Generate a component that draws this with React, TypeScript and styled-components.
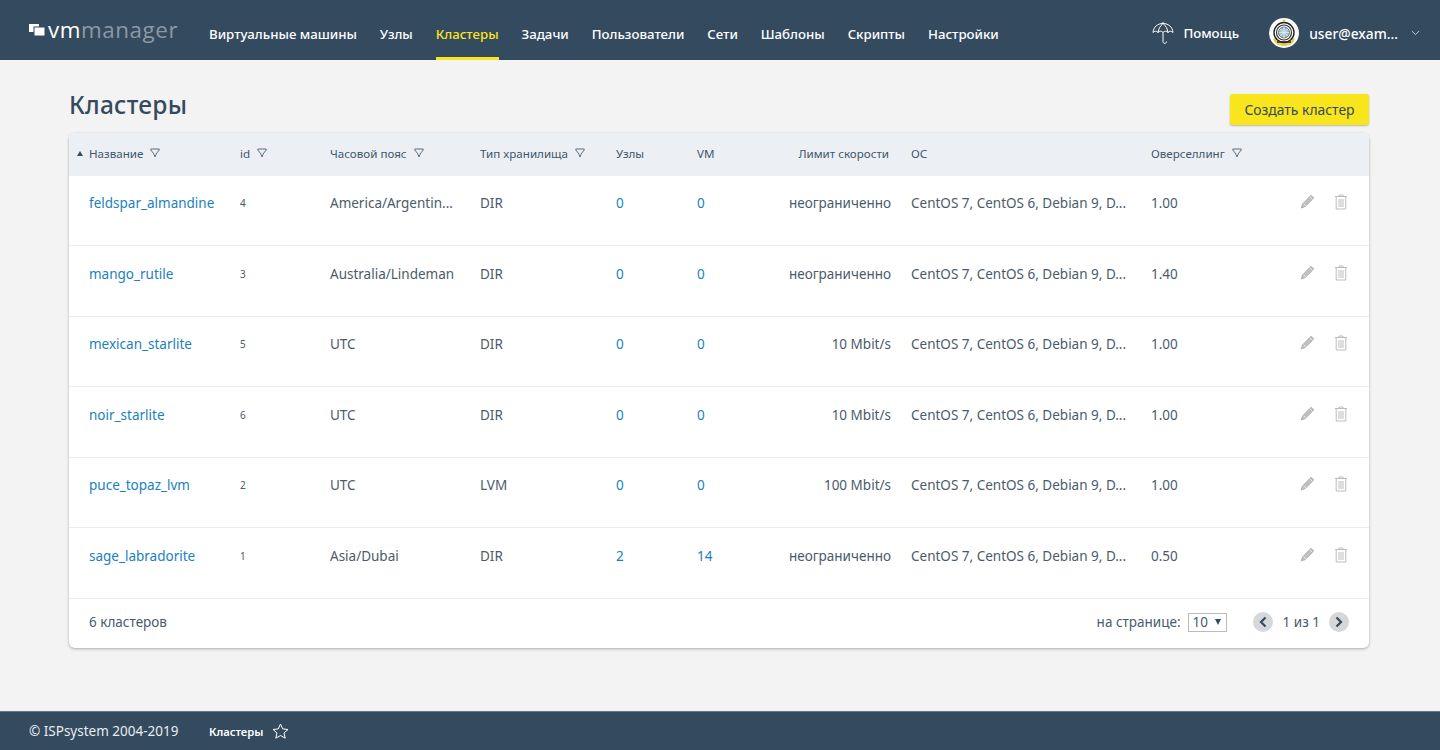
import React from "react"
import styled, { createGlobalStyle } from "styled-components"

const GlobalStyle = createGlobalStyle`
    html, body {
        margin: 0;
        padding: 0;
        height: 100%;
        background: #f3f3f3;
        font-family: "Noto Sans", "Open Sans", sans-serif;
        color: #344a5e;
    }
    #root {
        height: 100%;
    }
`

const COLUMNS = "161px 90px 150px 136px 81px 90px 124px 240px 140px 1fr"

const Page = styled.div`
    height: 750px;
    display: flex;
    flex-direction: column;
    overflow: hidden;
`

const Header = styled.header`
    height: 60px;
    flex-shrink: 0;
    display: flex;
    align-items: stretch;
    background: #344a5f;
    padding-left: 29px;
`

const Logo = styled.div`
    width: 180px;
    display: flex;
    align-items: center;
    gap: 2px;
    box-sizing: border-box;
`

const LogoText = styled.div`
    font-family: "Open Sans", sans-serif;
    font-size: 22.4px;
    letter-spacing: 0.55px;
    line-height: 24px;
    color: #8b98a5;
`

const LogoStrong = styled.span`
    color: #ffffff;
`

const Nav = styled.nav`
    display: flex;
    gap: 22.9px;
`

const NavItem = styled.a<{ $active?: boolean }>`
    display: flex;
    align-items: center;
    padding-top: 11px;
    height: 60px;
    box-sizing: border-box;
    font-size: 13.25px;
    font-weight: 500;
    color: ${({ $active }) => ($active ? "#f9e51b" : "#ffffff")};
    border-bottom: 3px solid ${({ $active }) => ($active ? "#f9e51b" : "transparent")};
`

const HeaderRight = styled.div`
    margin-left: auto;
    display: flex;
    align-items: center;
    padding-right: 20px;
    padding-top: 6px;
    font-size: 13.25px;
    font-weight: 500;
    color: #ffffff;
`

const Help = styled.div`
    display: flex;
    align-items: center;
    gap: 9px;
    margin-right: 30px;
`

const User = styled.div`
    display: flex;
    align-items: center;
    gap: 10px;
    font-size: 13.8px;
`

const UserChevron = styled.svg`
    margin-left: 3px;
`

const Main = styled.main`
    flex-grow: 1;
    padding: 34px 71px 0 69px;
    min-height: 0;
`

const TitleRow = styled.div`
    height: 39px;
    display: flex;
    align-items: flex-start;
    justify-content: space-between;
`

const Title = styled.h1`
    margin: -2px 0 0;
    font-size: 24.5px;
    line-height: 25px;
    font-weight: 500;
    letter-spacing: 0.25px;
    color: #344a5f;
`

const CreateButton = styled.button`
    width: 139px;
    height: 31px;
    padding: 0;
    border: none;
    border-radius: 3px;
    background: #f9e51b;
    box-shadow: 0 1px 2px rgba(0, 0, 0, 0.25);
    font-family: inherit;
    font-size: 13.9px;
    color: #344a5f;
`

const Card = styled.section`
    background: #ffffff;
    border-radius: 6px;
    box-shadow: 0 1px 3px rgba(0, 0, 0, 0.3);
    overflow: hidden;
`

const HeadRow = styled.div`
    height: 42.5px;
    padding-bottom: 2px;
    box-sizing: border-box;
    display: grid;
    grid-template-columns: ${COLUMNS};
    align-items: center;
    background: #ecf0f4;
    font-size: 11.6px;
    color: #42566a;
`

const HeadCell = styled.div<{ $first?: boolean; $right?: boolean }>`
    position: relative;
    display: flex;
    align-items: center;
    justify-content: ${({ $right }) => ($right ? "flex-end" : "flex-start")};
    gap: 7px;
    padding-left: ${({ $first }) => ($first ? "20px" : "10px")};
    padding-right: ${({ $right }) => ($right ? "12px" : "0")};
    white-space: nowrap;
`

const SortMark = styled.span`
    position: absolute;
    left: 8px;
    top: 5px;
    width: 0;
    height: 0;
    border-left: 3px solid transparent;
    border-right: 3px solid transparent;
    border-bottom: 5px solid #344a5f;
`

const Row = styled.div`
    height: 70.5px;
    box-sizing: border-box;
    padding-top: 18.9px;
    display: grid;
    grid-template-columns: ${COLUMNS};
    align-items: start;
    border-bottom: 1px solid #ececec;
    line-height: 18px;
    color: #4a5b6b;
`

const Cell = styled.div<{ $first?: boolean; $right?: boolean; $small?: boolean }>`
    min-width: 0;
    padding-left: ${({ $first }) => ($first ? "20px" : "10px")};
    padding-right: ${({ $right }) => ($right ? "10px" : "0")};
    text-align: ${({ $right }) => ($right ? "right" : "left")};
    font-size: ${({ $small }) => ($small ? "10px" : "13.5px")};
    white-space: nowrap;
`

const CellLink = styled.a`
    color: #1a81c0;
    text-decoration: none;
`

const Actions = styled.div`
    display: flex;
    justify-content: flex-end;
    gap: 19px;
    padding-right: 21px;
`

const CardFooter = styled.div`
    height: 49.5px;
    box-sizing: border-box;
    padding: 0 20px 2px;
    display: flex;
    align-items: center;
    font-size: 13.5px;
    color: #4a5b6b;
`

const Pager = styled.div`
    margin-left: auto;
    display: flex;
    align-items: center;
`

const SelectBox = styled.div`
    width: 39px;
    height: 19px;
    box-sizing: border-box;
    margin-left: 7px;
    margin-right: 26px;
    padding: 0 5px 0 4px;
    display: flex;
    align-items: center;
    justify-content: space-between;
    border: 1px solid #bcbcbc;
    font-size: 13.5px;
`

const SelectArrow = styled.span`
    width: 0;
    height: 0;
    border-left: 3px solid transparent;
    border-right: 3px solid transparent;
    border-top: 6px solid #344a5f;
`

const PageButton = styled.button`
    width: 20px;
    height: 20px;
    padding: 0;
    display: flex;
    align-items: center;
    justify-content: center;
    border: none;
    border-radius: 50%;
    background: #d5d7d9;
`

const PageText = styled.span`
    margin: 0 9px 0 10px;
`

const Footer = styled.footer`
    height: 39px;
    box-sizing: border-box;
    flex-shrink: 0;
    display: flex;
    align-items: center;
    padding-left: 29px;
    background: #344a5f;
    border-top: 1px solid #66768a;
    color: #e9ecef;
    font-size: 13.5px;
`

const Copyright = styled.div`
    width: 180px;
`

const Crumb = styled.div`
    display: flex;
    align-items: center;
    gap: 9px;
    font-size: 11.2px;
    font-weight: 600;
    color: #ffffff;
`

const FilterIcon = () => (
    <svg width="10" height="10" viewBox="0 0 10 10" fill="none" stroke="#5b6d7e" strokeWidth="1">
        <path d="M.8 1h8.400v1L6 6v.4L5 9 4 6.400V6L.8 2z" />
    </svg>
)

const PencilIcon = () => (
    <svg width="15" height="15" viewBox="0 0 15 15">
        <path d="M11 1.200l2.800 2.800-8.600 8.600-4 1.400 1.300-4z" fill="#c0c0c0" stroke="#a6a6a6" strokeWidth=".8" />
        <path d="M3.600 9.800l2.600 2.600M9.600 2.600l2.800 2.800" stroke="#f4f4f4" strokeWidth=".8" />
    </svg>
)

const TrashIcon = () => (
    <svg width="14" height="16" viewBox="0 0 14 16" fill="none" stroke="#bdbdbd" strokeWidth="1">
        <path d="M1 2.500h12M5 2.500V1h4v1.500M2.200 2.500V15h9.600V2.500M5 5v8M7 5v8M9 5v8" />
    </svg>
)

const Umbrella = () => (
    <svg width="22" height="24" viewBox="0 0 22 24" fill="none" stroke="#fff" strokeWidth="1">
        <path d="M1 11.500C1.500 6 5.500 2.500 11 2.500S20.500 6 21 11.500C19.500 9.800 17.500 9.800 16 11.500 14.500 9.800 12.500 9.800 11 11.500 9.500 9.800 7.500 9.800 6 11.500 4.500 9.800 2.500 9.800 1 11.500Z" />
        <path d="M11 1v1.500M11 2.500C8 5 6.500 8 6 11.500M11 2.500C14 5 15.500 8 16 11.500M11 11.500V20.500C11 23 14.500 23 14.500 20.500" />
    </svg>
)

const Avatar = () => (
    <svg width="30" height="30" viewBox="0 0 30 30">
        <circle cx="15" cy="15" r="15" fill="#fff" />
        <circle cx="15" cy="2.500" r="1.300" fill="#e8d12a" />
        <path d="M4 21c2 5 6 7 11 7s9-2 11-7l-2-1c-2 4-5 5-9 5s-7-1-9-5z" fill="#e4d24a" />
        <circle cx="15" cy="14.500" r="10" fill="none" stroke="#222" strokeWidth="1.400" />
        <circle cx="15" cy="14.500" r="7.500" fill="#fff" stroke="#333" strokeWidth="1.200" />
        <circle cx="15" cy="14.500" r="5.500" fill="#9fc3d4" stroke="#555" strokeWidth=".8" />
        <path d="M11 11l8 7M19 11l-8 7M15 9v11M10 14.500h10" stroke="#e8eef1" strokeWidth=".8" />
        <path d="M8 24h14" stroke="#222" strokeWidth="1.400" />
    </svg>
)

const LogoMark = () => (
    <svg width="17" height="14" viewBox="0 0 17 14">
        <rect x="0" y="1" width="10" height="8" fill="#fff" />
        <rect x="5" y="4" width="11" height="9" fill="#fff" stroke="#344a5f" strokeWidth="1" />
    </svg>
)

const Chevron = ({ dir }: { dir: "left" | "right" }) => (
    <svg width="10" height="12" viewBox="0 0 10 12" fill="none" stroke="#344a5f" strokeWidth="2.200">
        <path d={dir === "left" ? "M7.500 1.500L3 6l4.500 4.500" : "M2.500 1.500L7 6l-4.500 4.500"} />
    </svg>
)

const Star = () => (
    <svg width="17" height="16" viewBox="0 0 17 16" fill="none" stroke="#fff" strokeWidth="1">
        <path d="M8.500 1l2.200 4.900 5.300.6-4 3.500 1.200 5.200-4.700-2.700-4.700 2.700L5 10 1 6.500l5.300-.6z" />
    </svg>
)

const navItems = ["Виртуальные машины", "Узлы", "Кластеры", "Задачи", "Пользователи", "Сети", "Шаблоны", "Скрипты", "Настройки"]

const OS_LIST = "CentOS 7, CentOS 6, Debian 9, D..."

const clusters = [
    { name: "feldspar_almandine", id: 4, zone: "America/Argentin...", storage: "DIR", nodes: 0, vm: 0, limit: "неограниченно", over: "1.00" },
    { name: "mango_rutile", id: 3, zone: "Australia/Lindeman", storage: "DIR", nodes: 0, vm: 0, limit: "неограниченно", over: "1.40" },
    { name: "mexican_starlite", id: 5, zone: "UTC", storage: "DIR", nodes: 0, vm: 0, limit: "10 Mbit/s", over: "1.00" },
    { name: "noir_starlite", id: 6, zone: "UTC", storage: "DIR", nodes: 0, vm: 0, limit: "10 Mbit/s", over: "1.00" },
    { name: "puce_topaz_lvm", id: 2, zone: "UTC", storage: "LVM", nodes: 0, vm: 0, limit: "100 Mbit/s", over: "1.00" },
    { name: "sage_labradorite", id: 1, zone: "Asia/Dubai", storage: "DIR", nodes: 2, vm: 14, limit: "неограниченно", over: "0.50" },
]

const App: React.FC = () => {
    return (
        <Page>
            <GlobalStyle />
            <Header>
                <Logo>
                    <LogoMark />
                    <LogoText>
                        <LogoStrong>vm</LogoStrong>manager
                    </LogoText>
                </Logo>
                <Nav>
                    {navItems.map((item) => (
                        <NavItem key={item} $active={item === "Кластеры"}>
                            {item}
                        </NavItem>
                    ))}
                </Nav>
                <HeaderRight>
                    <Help>
                        <Umbrella />
                        Помощь
                    </Help>
                    <User>
                        <Avatar />
                        user@exam...
                        <UserChevron width="9" height="6" viewBox="0 0 9 6" fill="none" stroke="#c4ccd3" strokeWidth="1">
                            <path d="M.8 1l3.700 3.700L8.200 1" />
                        </UserChevron>
                    </User>
                </HeaderRight>
            </Header>

            <Main>
                <TitleRow>
                    <Title>Кластеры</Title>
                    <CreateButton>Создать кластер</CreateButton>
                </TitleRow>
                <Card>
                    <HeadRow>
                        <HeadCell $first>
                            <SortMark />
                            Название <FilterIcon />
                        </HeadCell>
                        <HeadCell>
                            id <FilterIcon />
                        </HeadCell>
                        <HeadCell>
                            Часовой пояс <FilterIcon />
                        </HeadCell>
                        <HeadCell>
                            Тип хранилища <FilterIcon />
                        </HeadCell>
                        <HeadCell>Узлы</HeadCell>
                        <HeadCell>VM</HeadCell>
                        <HeadCell $right>Лимит скорости</HeadCell>
                        <HeadCell>ОС</HeadCell>
                        <HeadCell>
                            Оверселлинг <FilterIcon />
                        </HeadCell>
                        <HeadCell />
                    </HeadRow>
                    {clusters.map((cluster) => (
                        <Row key={cluster.id}>
                            <Cell $first>
                                <CellLink>{cluster.name}</CellLink>
                            </Cell>
                            <Cell $small>{cluster.id}</Cell>
                            <Cell>{cluster.zone}</Cell>
                            <Cell>{cluster.storage}</Cell>
                            <Cell>
                                <CellLink>{cluster.nodes}</CellLink>
                            </Cell>
                            <Cell>
                                <CellLink>{cluster.vm}</CellLink>
                            </Cell>
                            <Cell $right>{cluster.limit}</Cell>
                            <Cell>{OS_LIST}</Cell>
                            <Cell>{cluster.over}</Cell>
                            <Cell>
                                <Actions>
                                    <PencilIcon />
                                    <TrashIcon />
                                </Actions>
                            </Cell>
                        </Row>
                    ))}
                    <CardFooter>
                        6 кластеров
                        <Pager>
                            на странице:
                            <SelectBox>
                                10
                                <SelectArrow />
                            </SelectBox>
                            <PageButton>
                                <Chevron dir="left" />
                            </PageButton>
                            <PageText>1 из 1</PageText>
                            <PageButton>
                                <Chevron dir="right" />
                            </PageButton>
                        </Pager>
                    </CardFooter>
                </Card>
            </Main>

            <Footer>
                <Copyright>© ISPsystem 2004-2019</Copyright>
                <Crumb>
                    Кластеры
                    <Star />
                </Crumb>
            </Footer>
        </Page>
    )
}

export default App
